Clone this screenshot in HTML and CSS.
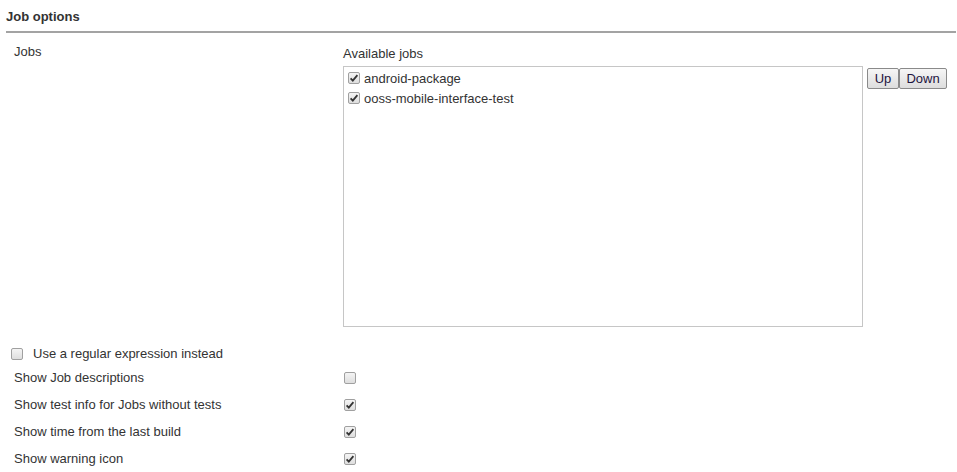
FILE: index.html
```html
<!DOCTYPE html>
<html>
<head>
<meta charset="utf-8">
<link rel="stylesheet" href="styles.css">
</head>
<body>
<div class="page">
  <div class="section-title">Job options</div>
  <div class="jobs-row">
    <div class="label jobs-label">Jobs</div>
    <div class="jobs-field">
      <div class="field-caption">Available jobs</div>
      <div class="jobs-list-wrap">
        <div class="jobs-list">
          <div class="job-item"><span class="cb checked"><svg viewBox="0 0 12 12" width="12" height="12"><path d="M2.6 6.4 L4.8 8.6 L9.4 3.2" fill="none" stroke="#333" stroke-width="1.8"/></svg></span><span>android-package</span></div>
          <div class="job-item"><span class="cb checked"><svg viewBox="0 0 12 12" width="12" height="12"><path d="M2.6 6.4 L4.8 8.6 L9.4 3.2" fill="none" stroke="#333" stroke-width="1.8"/></svg></span><span>ooss-mobile-interface-test</span></div>
        </div>
        <div class="order-buttons">
          <button class="btn btn-up">Up</button><button class="btn btn-down">Down</button>
        </div>
      </div>
    </div>
  </div>
  <div class="regex-row"><span class="cb"></span><span class="regex-label">Use a regular expression instead</span></div>
  <div class="options">
    <div class="label">Show Job descriptions</div>
    <div class="opt-cell"><span class="cb"></span></div>
    <div class="label">Show test info for Jobs without tests</div>
    <div class="opt-cell"><span class="cb checked"><svg viewBox="0 0 12 12" width="12" height="12"><path d="M2.6 6.4 L4.8 8.6 L9.4 3.2" fill="none" stroke="#333" stroke-width="1.8"/></svg></span></div>
    <div class="label">Show time from the last build</div>
    <div class="opt-cell"><span class="cb checked"><svg viewBox="0 0 12 12" width="12" height="12"><path d="M2.6 6.4 L4.8 8.6 L9.4 3.2" fill="none" stroke="#333" stroke-width="1.8"/></svg></span></div>
    <div class="label">Show warning icon</div>
    <div class="opt-cell"><span class="cb checked"><svg viewBox="0 0 12 12" width="12" height="12"><path d="M2.6 6.4 L4.8 8.6 L9.4 3.2" fill="none" stroke="#333" stroke-width="1.8"/></svg></span></div>
  </div>
</div>
</body>
</html>
```
FILE: styles.css
```css
html, body {
  margin: 0;
  padding: 0;
  background: #fff;
}
body {
  font-family: "Liberation Sans", Arial, sans-serif;
  font-size: 13px;
  line-height: 15px;
  color: #333;
}
.page {
  padding: 0 1px 0 6px;
}
.section-title {
  font-weight: bold;
  padding: 9px 0 7px;
  border-bottom: 2px solid #a3a3a3;
}
.jobs-row {
  display: grid;
  grid-template-columns: 329px auto;
  padding: 11px 0 0 8px;
}
.field-caption {
  padding-top: 2px;
  margin-bottom: 5px;
}
.jobs-list-wrap {
  display: flex;
  align-items: flex-start;
}
.jobs-list {
  width: 518px;
  height: 256px;
  border: 1px solid #c6c6c6;
  padding: 1px 0 2px 0;
  box-sizing: content-box;
}
.job-item {
  display: flex;
  align-items: center;
  height: 20px;
  padding-left: 4px;
}
.job-item .cb {
  margin-right: 4px;
}
.cb {
  display: inline-block;
  width: 10px;
  height: 10px;
  border: 1px solid #a0a0a0;
  border-radius: 2px;
  background: linear-gradient(#f4f4f4, #dedede);
  position: relative;
  flex: none;
}
.cb svg {
  position: absolute;
  left: -1px;
  top: -1px;
}
.order-buttons {
  display: flex;
  margin-left: 4px;
  margin-top: 2px;
}
.btn {
  font-family: "Liberation Sans", Arial, sans-serif;
  font-size: 13px;
  line-height: 15px;
  color: #1e1440;
  height: 21px;
  padding: 0;
  margin: 0;
  border: 1px solid #8a8a8a;
  border-radius: 2px;
  background: linear-gradient(#f6f6f6, #dddddd);
}
.btn-up {
  width: 32px;
}
.btn-down {
  width: 48px;
}
.regex-row {
  display: flex;
  align-items: center;
  height: 15px;
  margin-top: 19px;
  padding-left: 5px;
}
.regex-row .cb {
  margin-right: 10px;
}
.options {
  display: grid;
  grid-template-columns: 329px auto;
  grid-auto-rows: 27px;
  padding-left: 8px;
  margin-top: 3px;
}
.options .label,
.opt-cell {
  display: flex;
  align-items: center;
}
.opt-cell {
  padding-left: 1px;
}
```
